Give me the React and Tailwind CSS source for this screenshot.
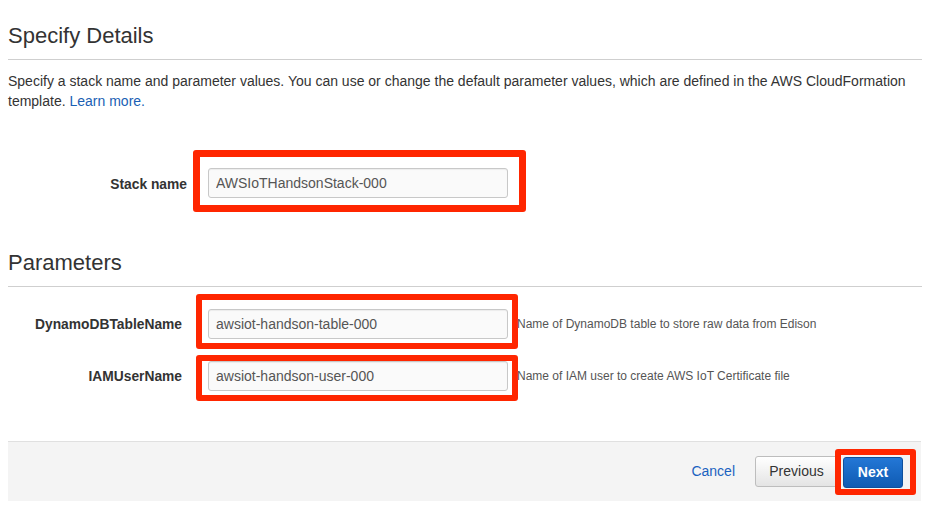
export default function App() {
  const font = { fontFamily: '"Liberation Sans", Arial, Helvetica, sans-serif' };

  const inputCls =
    "block w-[300px] h-[30px] rounded-[3px] border border-[#c8c8c8] bg-[#fafafa] px-[7px] text-[14px] text-[#555] shadow-[inset_0_1px_1px_rgba(0,0,0,0.06)] outline-none";

  return (
    <div style={font} className="min-h-[513px] bg-white text-[#333]">
      <div className="mx-2 w-[914px]">
        <h2 className="pt-6 text-[22px] leading-[24px] font-normal text-[#333]">Specify Details</h2>
        <div className="mt-[11px] h-px bg-[#cfcfcf]" />
        <p className="mt-[11px] text-[14px] leading-[20px] text-[#333]">
          Specify a stack name and parameter values. You can use or change the default parameter values, which are
          defined in the AWS CloudFormation
          <br />
          template. <a className="text-[#1a5fb4]" href="#">Learn more.</a>
        </p>

        {/* stack name */}
        <div className="mt-[39px] flex items-start">
          <label className="mt-[20px] w-[179px] text-right text-[13.8px] leading-[30px] font-bold">Stack name</label>
          <div className="ml-[6px] rounded-[3px] border-[7px] border-[#ff2600] pl-2 pr-[11px] pt-[11px] pb-[7px]">
            <input className={inputCls} defaultValue="AWSIoTHandsonStack-000" />
          </div>
        </div>

        <h2 className="mt-[39px] text-[22px] leading-[24px] font-normal text-[#333]">Parameters</h2>
        <div className="mt-[11px] h-px bg-[#cfcfcf]" />

        {/* parameters */}
        <div className="mt-[7px] flex items-start">
          <label className="mt-[16px] w-[174px] text-right text-[13.8px] leading-[30px] font-bold">DynamoDBTableName</label>
          <div className="ml-[14px] rounded-[3px] border-[6px] border-[#ff2600] pl-[6px] pr-1 pt-[9px] pb-[4px]">
            <input className={inputCls} defaultValue="awsiot-handson-table-000" />
          </div>
          <span className="mt-[15px] -ml-px text-[12px] leading-[30px] text-[#555]">
            Name of DynamoDB table to store raw data from Edison
          </span>
        </div>
        <div className="mt-[6px] flex items-start">
          <label className="mt-[7px] w-[174px] text-right text-[13.8px] leading-[30px] font-bold">IAMUserName</label>
          <div className="ml-[14px] rounded-[3px] border-[6px] border-[#ff2600] pl-[6px] pr-1 pt-0 pb-[4px]">
            <input className={inputCls} defaultValue="awsiot-handson-user-000" />
          </div>
          <span className="mt-[6px] -ml-px text-[12px] leading-[30px] text-[#555]">
            Name of IAM user to create AWS IoT Certificate file
          </span>
        </div>

        {/* footer */}
        <div className="mt-10 flex h-[60px] w-[913px] items-center justify-end border-t border-[#e0e0e0] bg-[#f4f4f4] pr-[5px]">
          <a href="#" className="mr-5 text-[14px] text-[#1a62c0]">Cancel</a>
          <button className="h-[31px] w-[83px] rounded-[3px] border border-[#bdbdbd] bg-gradient-to-b from-[#ffffff] to-[#e4e4e4] text-[14px] text-[#333]">
            Previous
          </button>
          <div className="relative -ml-[3px] rounded-[3px] border-[6px] border-[#ff2600] pl-[2px] pr-[7px] pt-[2px] pb-px">
            <button className="h-[31px] w-[60px] rounded-[3px] border border-[#0e4f9c] bg-gradient-to-b from-[#2377d6] to-[#0f5bb3] text-[14px] font-bold text-white">
              Next
            </button>
          </div>
        </div>
      </div>
    </div>
  );
}
